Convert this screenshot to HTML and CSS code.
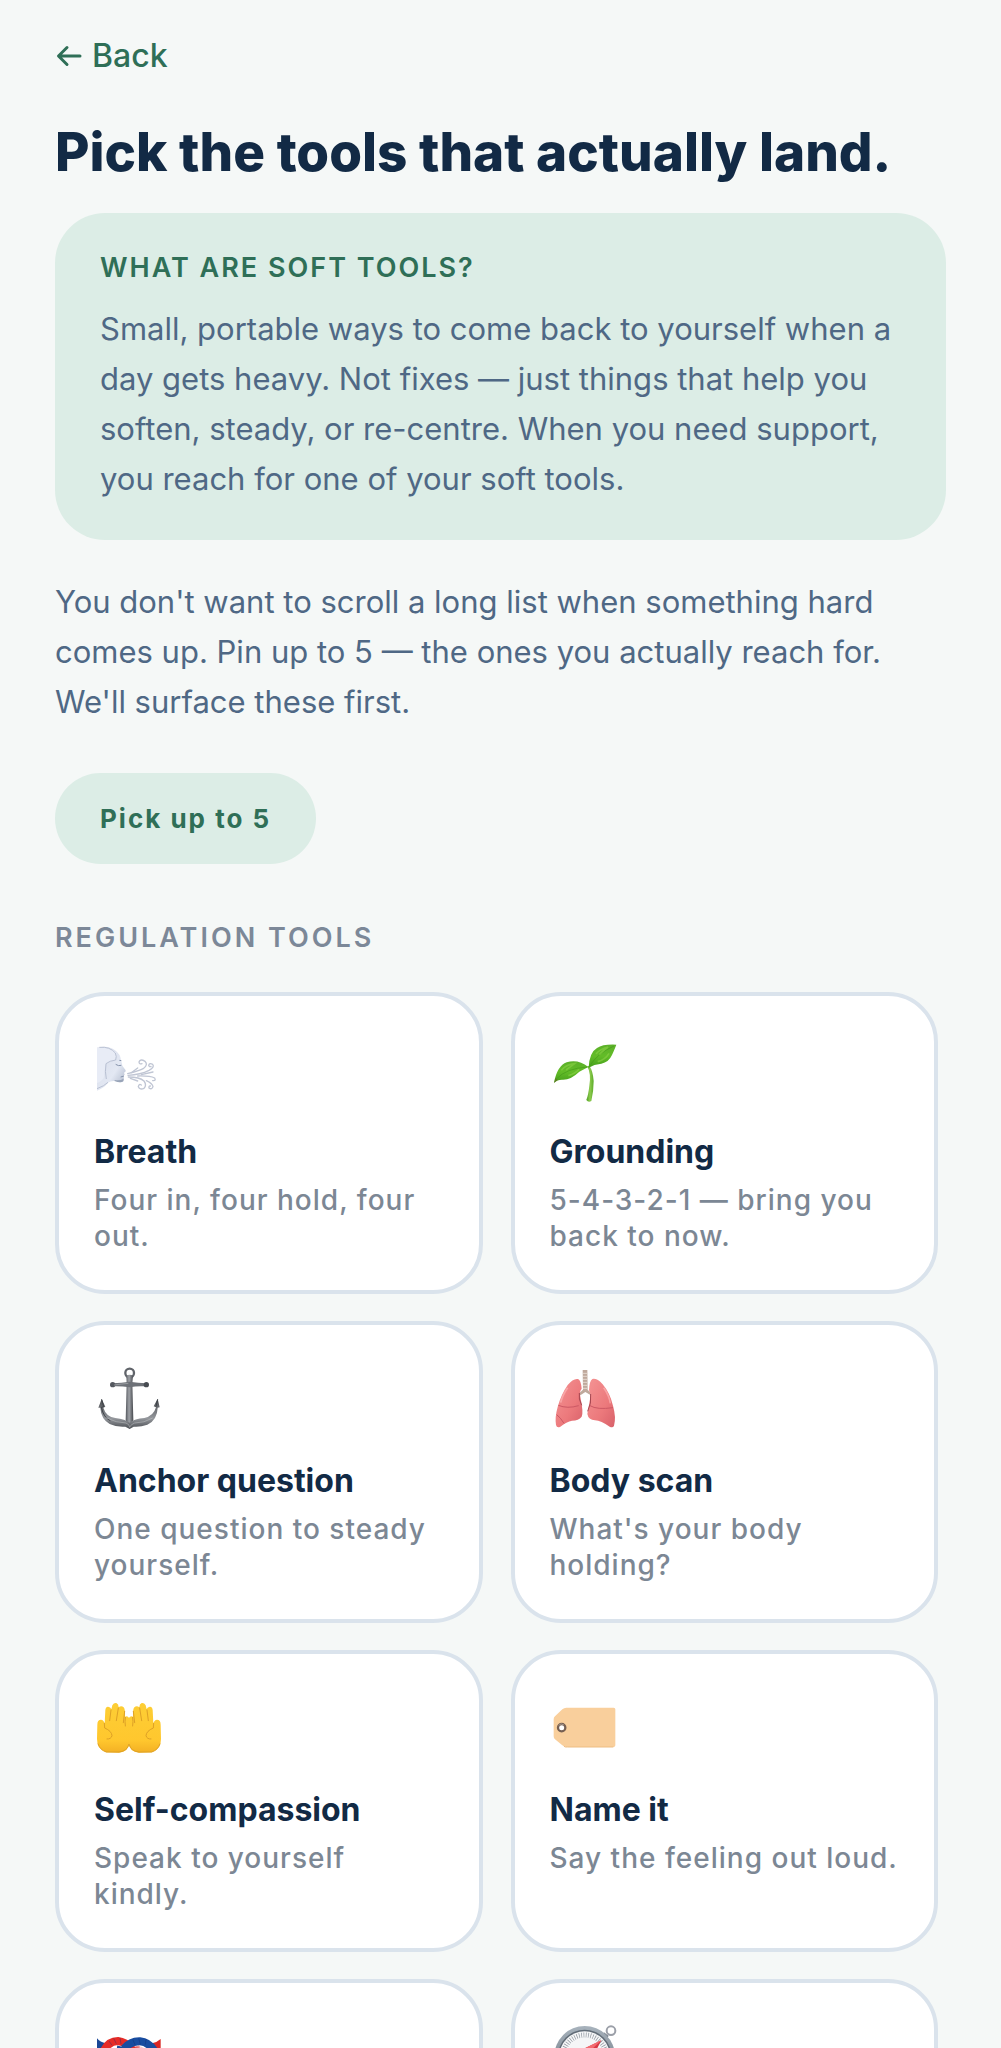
FILE: index.html
```html
<!DOCTYPE html>
<html lang="en">
<head>
<meta charset="utf-8">
<meta name="viewport" content="width=device-width, initial-scale=1">
<title>Soft tools</title>
<link rel="stylesheet" href="styles.css">
</head>
<body>
<main class="screen">
  <a class="back" href="#">
    <svg class="back-arrow" viewBox="0 0 26 24" aria-hidden="true"><path d="M24 12H3M11 3.500L2.500 12L11 20.500"/></svg>
    <span>Back</span>
  </a>
  <h1 class="title">Pick the tools that actually land.</h1>
  <section class="info">
    <h2 class="info-title">WHAT ARE SOFT TOOLS?</h2>
    <p class="copy">Small, portable ways to come back to yourself when a day gets heavy. Not fixes — just things that help you soften, steady, or re-centre. When you need support, you reach for one of your soft tools.</p>
  </section>
  <p class="copy intro">You don't want to scroll a long list when something hard comes up. Pin up to 5 — the ones you actually reach for. We'll surface these first.</p>
  <p class="pill">Pick up to 5</p>
  <h2 class="section-title">REGULATION TOOLS</h2>
  <div class="grid">
    <button class="card" type="button">
      <svg class="icon" viewBox="45 22 198 198" aria-hidden="true">
        <defs>
          <linearGradient id="face" x1="0" y1="0" x2="1" y2="1"><stop offset="0" stop-color="#d6dbe9"/><stop offset=".6" stop-color="#e3e8f3"/><stop offset="1" stop-color="#a5afc3"/></linearGradient>
        </defs>
        <path d="M51 51Q84 42 105 59Q122 71 123 89Q126 98 127 105L137 119Q138 124 132 126L134 132L130 136Q134 143 130 151Q124 158 108 152Q94 149 84 156Q75 170 51 180Z" fill="url(#face)"/>
        <path d="M51 51Q89 43 108 65Q113 75 107 88Q90 91 78 101Q73 120 72 139Q67 151 51 158Z" fill="#e8ecf6"/>
        <path d="M58 50Q90 47 106 67Q111 77 107 88Q89 90 78 99Q74 123 79 145M84 155Q73 166 51 174" fill="none" stroke="#b9c1d3" stroke-width="3"/>
        <path d="M107 101Q115 107 124 104M122 139L132 136M118 89L124 90" fill="none" stroke="#8794ad" stroke-width="3"/>
        <path d="M104 151Q121 158 130 152L131 144Q120 151 104 148Z" fill="#98a4b8"/>
        <g fill="none" stroke="#c0c6d4" stroke-width="4" stroke-linecap="round">
          <path d="M143 129Q178 120 191 113Q205 102 195 92Q181 83 177 94Q178 102 186 99"/>
          <path d="M144 134Q182 132 207 119Q225 109 218 101Q208 96 206 104Q208 110 213 107"/>
          <path d="M145 139Q179 139 192 151Q201 164 192 173Q180 179 175 168Q177 158 184 163"/>
          <path d="M173 136Q210 135 224 142Q229 151 218 150"/>
          <path d="M199 150Q217 158 219 168Q216 178 207 172Q206 165 211 166M154 126L173 112M184 132L219 124M151 143L173 151"/>
        </g>
      </svg>
      <span class="card-title">Breath</span>
      <span class="card-text">Four in, four hold, four out.</span>
    </button>
    <button class="card" type="button">
      <svg class="icon" viewBox="45 22 198 198" aria-hidden="true">
        <defs>
          <linearGradient id="leaf" x1="0" y1="0" x2="0" y2="1"><stop offset="0" stop-color="#5cb02a"/><stop offset=".5" stop-color="#62bc27"/><stop offset="1" stop-color="#459f1b"/></linearGradient>
          <linearGradient id="stem"><stop offset="0" stop-color="#4d9e20"/><stop offset=".5" stop-color="#8dcb4e"/><stop offset="1" stop-color="#5aaa27"/></linearGradient>
        </defs>
        <path d="M154 107Q166 130 160 165Q157 193 151 208Q157 216 166 211Q173 181 173 151Q171 121 160 105Z" fill="url(#stem)"/>
        <path d="M54 156Q64 105 92 95Q127 85 157 109Q142 117 130 123Q103 149 78 147Q63 147 54 156Z" fill="url(#leaf)"/>
        <path d="M158 111Q160 65 183 52Q201 40 241 42Q237 53 228 73Q218 95 196 99Q174 101 158 111Z" fill="url(#leaf)"/>
        <path d="M62 144Q91 113 154 109M161 106Q184 68 234 46" fill="none" stroke="#459a1b" stroke-width="2"/>
        <path d="M76 119Q91 101 116 99Q104 108 90 118M97 135Q118 129 129 116M180 70Q191 56 216 49Q202 59 190 72M185 93Q208 87 219 68" fill="none" stroke="#87cf43" stroke-width="5" opacity=".65"/>
        <path d="M54 157L59 143L65 148Z" fill="#617b24"/>
      </svg>
      <span class="card-title">Grounding</span>
      <span class="card-text">5-4-3-2-1 — bring you back to now.</span>
    </button>
    <button class="card" type="button">
      <svg class="icon" viewBox="45 35 198 198" aria-hidden="true">
        <defs>
          <linearGradient id="iron"><stop offset="0" stop-color="#53565c"/><stop offset=".45" stop-color="#a0a3a8"/><stop offset="1" stop-color="#45484d"/></linearGradient>
          <linearGradient id="arm" x1="0" y1="0" x2="0" y2="1"><stop offset="0" stop-color="#45484c"/><stop offset=".65" stop-color="#94979c"/><stop offset="1" stop-color="#4b4e53"/></linearGradient>
        </defs>
        <circle cx="149" cy="53" r="13" fill="none" stroke="#60646a" stroke-width="7"/>
        <path d="M139 62Q149 54 159 62L157 83L160 194L149 221L137 194L140 83Z" fill="url(#iron)"/>
        <path d="M98 84Q125 83 149 79Q175 83 198 84V93Q172 91 149 96Q124 92 98 93Z" fill="#6d7177"/>
        <circle cx="98" cy="88" r="8" fill="#54585f"/><circle cx="199" cy="88" r="8" fill="#474b51"/>
        <path d="M55 157L65 131L76 154L70 157Q78 184 106 188Q136 191 149 202Q164 190 193 188Q221 182 228 156L221 153L233 130L239 156L233 157Q232 194 202 208Q180 216 161 214L149 221L136 214Q110 216 89 206Q63 191 61 157Z" fill="url(#arm)"/>
        <path d="M65 132L71 154L64 156Q71 187 91 196M233 132L228 154" fill="none" stroke="#3e4248" stroke-width="3"/>
        <path d="M102 89Q125 86 145 84M77 187Q110 203 138 203Q149 207 149 216Q152 207 164 203Q193 203 218 188" fill="none" stroke="#c2c4c6" stroke-width="3" opacity=".5"/>
      </svg>
      <span class="card-title">Anchor question</span>
      <span class="card-text">One question to steady yourself.</span>
    </button>
    <button class="card" type="button">
      <svg class="icon" viewBox="45 35 198 198" aria-hidden="true">
        <defs>
          <linearGradient id="lung" x1="0" y1="0" x2="1" y2="1"><stop offset="0" stop-color="#f49494"/><stop offset=".6" stop-color="#ec797c"/><stop offset="1" stop-color="#d8616a"/></linearGradient>
        </defs>
        <path d="M140 44H154L155 104L167 113L162 118L148 110L133 120L129 114L141 103Z" fill="#bfa99c"/>
        <path d="M141 54H154M141 63H154M141 72H154M141 81H154M141 90H154M141 99H154" stroke="#e4d7ce" stroke-width="3"/>
        <path d="M126 71Q135 75 137 100Q129 109 133 124Q143 171 137 184Q128 196 108 196Q92 199 73 214Q63 220 60 209Q56 187 65 155Q75 118 95 89Q112 68 126 71Z" fill="url(#lung)"/>
        <path d="M169 71Q160 77 159 105Q165 114 162 132L154 176Q157 193 177 195Q195 196 221 214Q231 219 234 211Q241 186 231 151Q222 113 200 87Q183 68 169 71Z" fill="url(#lung)"/>
        <path d="M67 150Q94 161 128 151M62 178Q73 186 84 204M162 151Q183 164 231 157" fill="none" stroke="#cc5864" stroke-width="3"/>
        <path d="M95 97Q79 120 74 142M203 97Q219 119 223 144" fill="none" stroke="#ffbbba" stroke-width="5" opacity=".6"/>
        <path d="M130 113Q127 131 137 150M164 116Q167 145 155 168" fill="none" stroke="#a54650" stroke-width="3"/>
      </svg>
      <span class="card-title">Body scan</span>
      <span class="card-text">What's your body holding?</span>
    </button>
    <button class="card" type="button">
      <svg class="icon" viewBox="45 34 198 198" aria-hidden="true">
        <defs>
          <linearGradient id="palm" x1="0" y1="0" x2="0" y2="1"><stop offset="0" stop-color="#fdce35"/><stop offset=".75" stop-color="#ffc72e"/><stop offset="1" stop-color="#f3b024"/></linearGradient>
          <g id="hand">
            <path d="M78 203Q51 194 51 163L52 120Q52 105 63 105Q71 106 74 116L76 76Q78 64 87 67Q92 68 94 74L97 62Q102 53 109 55Q116 58 116 68Q124 61 131 68Q136 73 135 96Q145 91 148 102V176Q145 203 117 204Z" fill="url(#palm)"/>
            <path d="M93 76L89 108M115 70L109 108M134 80L130 114M136 98Q134 111 136 124M73 116L74 130Q95 139 96 153Q93 164 81 163" fill="none" stroke="#dda026" stroke-width="3" stroke-linecap="round"/>
            <path d="M54 177Q60 196 79 202H117Q141 200 147 178" fill="none" stroke="#dfa326" stroke-width="3"/>
          </g>
        </defs>
        <use href="#hand"/><use href="#hand" transform="translate(294 0) scale(-1 1)"/>
      </svg>
      <span class="card-title">Self-compassion</span>
      <span class="card-text">Speak to yourself kindly.</span>
    </button>
    <button class="card" type="button">
      <svg class="icon" viewBox="45 34 198 198" aria-hidden="true">
        <path d="M91 69H233Q238 69 238 74V182Q238 187 233 187H91Q84 187 78 181L57 164Q53 161 53 155V104Q53 98 57 95L79 74Q84 69 91 69Z" fill="#f9cf9c"/>
        <path d="M84 185Q88 188 94 187H232" stroke="#edbd83" stroke-width="3" fill="none"/>
        <circle cx="77" cy="129" r="11" fill="#fff" stroke="#765f51" stroke-width="7"/>
        <path d="M68 122Q75 114 84 121" fill="none" stroke="#a6978c" stroke-width="3"/>
      </svg>
      <span class="card-title">Name it</span>
      <span class="card-text">Say the feeling out loud.</span>
    </button>
    <button class="card" type="button" aria-label="Knot">
      <svg class="icon" viewBox="165 195 198 198" aria-hidden="true">
        <path d="M171 235Q180 247 198 250L210 300H171Z" fill="#1a4796"/>
        <path d="M362 237Q351 247 336 250L320 300H362Z" fill="#da2723"/>
        <g fill="none" stroke-width="24">
          <path d="M300 268Q260 275 171 365" stroke="#dd2925"/>
          <path d="M230 268Q275 275 362 368" stroke="#164b9c"/>
          <path d="M190 276Q204 243 234 243Q256 245 276 268" stroke="#e62b26"/>
          <path d="M252 266Q272 243 300 244Q326 246 344 274" stroke="#184da0"/>
        </g>
        <path d="M207 243L216 256M221 235L229 251M240 234L243 252M278 238L286 256M296 234L301 254M318 237L316 254" stroke="#102c72" stroke-width="3" opacity=".35"/>
        <path d="M284 262Q297 255 312 264Z" fill="#f3bac0"/>
      </svg>
    </button>
    <button class="card" type="button" aria-label="Compass">
      <svg class="icon" viewBox="150 195 198 198" aria-hidden="true">
        <defs><linearGradient id="rim" x1="0" y1="0" x2="0" y2="1"><stop offset="0" stop-color="#a8b3bd"/><stop offset="1" stop-color="#5f6973"/></linearGradient></defs>
        <circle cx="330" cy="212" r="13" fill="none" stroke="#9b9fa8" stroke-width="6"/>
        <path d="M309 217L323 228L314 239L302 229Z" fill="#747e89"/>
        <circle cx="251" cy="289" r="91" fill="url(#rim)"/>
        <circle cx="251" cy="289" r="80" fill="#606b76"/>
        <circle cx="251" cy="290" r="76" fill="#f5f6f7"/>
        <circle cx="251" cy="290" r="65" fill="none" stroke="#89909a" stroke-width="15" stroke-dasharray="2 5"/>
        <path d="M301 241L268 305L232 274Z" fill="#d83a45"/>
        <path d="M301 241L250 289L232 274Z" fill="#f36b70"/>
      </svg>
    </button>
  </div>
</main>
</body>
</html>
```
FILE: styles.css
```css
* { box-sizing: border-box; }

body {
  margin: 0;
  background: #f5f8f7;
  color: #122a45;
  font-family: Inter, "Liberation Sans", sans-serif;
}

h1, h2, p { margin: 0; }

.screen {
  display: flex;
  flex-direction: column;
  align-items: flex-start;
  height: 100vh;
  padding: 36px 55px 0;
  overflow-y: auto;
  scrollbar-width: none;
}

.screen > * { flex-shrink: 0; }

.back {
  display: flex;
  align-items: center;
  gap: 9px;
  color: #2f6f57;
  font-size: 32px;
  font-weight: 500;
  line-height: 40px;
  text-decoration: none;
}

.back-arrow {
  width: 28px;
  height: 24px;
  fill: none;
  stroke: currentColor;
  stroke-width: 3;
  stroke-linecap: round;
  stroke-linejoin: round;
}

.title {
  margin-top: 44px;
  font-size: 53px;
  font-weight: 800;
  line-height: 64px;
}

.info {
  width: 100%;
  margin-top: 29px;
  padding: 37px 45px 36px;
  border-radius: 50px;
  background: #dcede6;
}

.info-title {
  margin-bottom: 18px;
  color: #2f6f57;
  font-size: 27px;
  font-weight: 600;
  line-height: 36px;
  letter-spacing: 2px;
}

.copy {
  color: #4f6885;
  font-size: 31px;
  line-height: 50px;
}

.intro { margin-top: 37px; }

.pill {
  margin-top: 46px;
  padding: 28px 45px 27px;
  border-radius: 46px;
  background: #dcede6;
  color: #2f6f57;
  font-size: 26px;
  font-weight: 700;
  line-height: 36px;
  letter-spacing: 2px;
}

.section-title {
  margin-top: 56px;
  color: #7c8898;
  font-size: 27px;
  font-weight: 600;
  line-height: 36px;
  letter-spacing: 3px;
}

.grid {
  display: grid;
  grid-template-columns: 1fr 1fr;
  gap: 27px 28px;
  width: 100%;
  margin-top: 36px;
  padding-right: 8px;
}

.card {
  display: flex;
  flex-direction: column;
  align-items: flex-start;
  min-height: 302px;
  padding: 36px 34px 36px 35px;
  border: 4px solid #dae3ec;
  border-radius: 50px;
  background: #fff;
  color: inherit;
  font-family: inherit;
  text-align: left;
}

.icon {
  width: 66px;
  height: 66px;
  margin: 6px 1px 28px;
}

.card-title {
  margin-bottom: 10px;
  font-size: 32px;
  font-weight: 700;
  line-height: 40px;
}

.card-text {
  color: #7c8794;
  font-size: 28px;
  font-weight: 500;
  line-height: 36px;
  letter-spacing: 1px;
}
```
